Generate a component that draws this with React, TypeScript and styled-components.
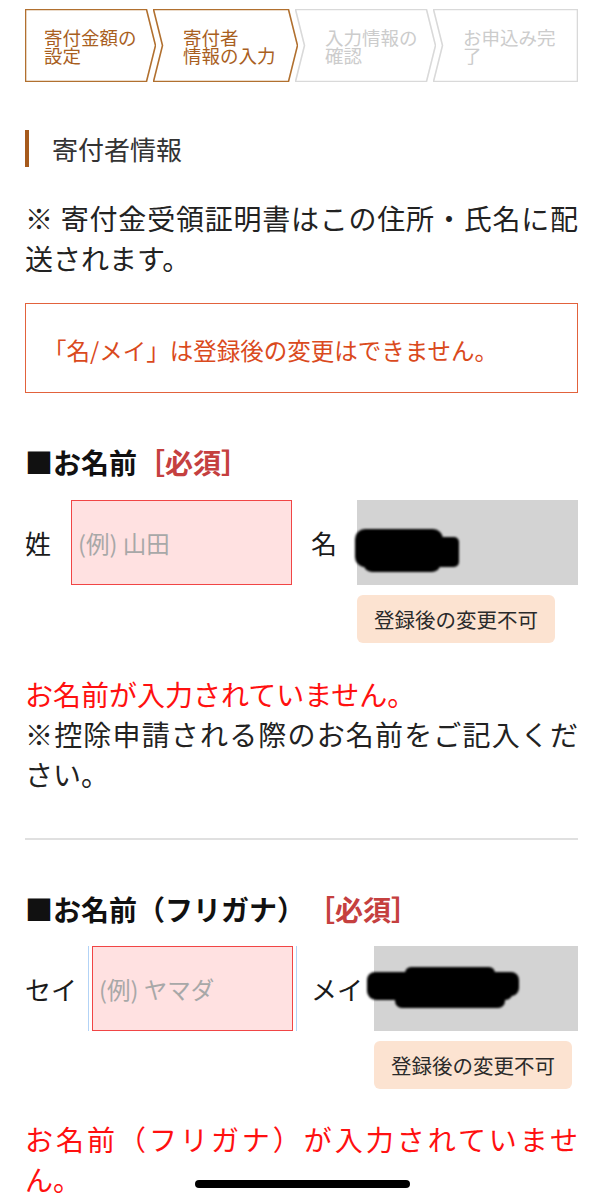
import React from 'react';
import styled, { createGlobalStyle } from 'styled-components';

const GlobalStyle = createGlobalStyle`
  html, body {
    margin: 0;
    padding: 0;
    background: #ffffff;
  }
  body {
    font-family: "Noto Sans CJK JP", "Noto Sans", sans-serif;
    color: #222;
  }
  * {
    box-sizing: border-box;
  }
`;

const Page = styled.div`
  padding: 9px 25px 0;
  width: 603px;
`;

/* ---------- step bar ---------- */

const StepBar = styled.div`
  display: flex;
  height: 73px;
`;

const Step = styled.div<{ $w: number; $first?: boolean }>`
  position: relative;
  flex: 0 0 ${(p) => p.$w}px;
  margin-left: ${(p) => (p.$first ? 0 : -3)}px;
  display: flex;
  align-items: center;
  padding-left: ${(p) => (p.$first ? 19 : 30)}px;
`;

const StepShape = styled.svg`
  position: absolute;
  inset: 0;
  width: 100%;
  height: 100%;
`;

const StepText = styled.span<{ $active?: boolean }>`
  position: relative;
  font-size: 18.5px;
  line-height: 18px;
  margin-top: 1px;
  color: ${(p) => (p.$active ? '#a95f1f' : '#cccccc')};
`;

type StepKind = 'first' | 'middle' | 'last';

const StepOutline = ({ w, kind, active }: { w: number; kind: StepKind; active: boolean }) => {
  const h = 73;
  const d = 9;
  let path = '';
  if (kind === 'first') {
    path = `M0.5,0.5 H${w - d - 0.5} L${w - 0.5},${h / 2} L${w - d - 0.5},${h - 0.5} H0.5 Z`;
  } else if (kind === 'middle') {
    path = `M0.5,0.5 H${w - d - 0.5} L${w - 0.5},${h / 2} L${w - d - 0.5},${h - 0.5} H0.5 L${d + 0.5},${h / 2} Z`;
  } else {
    path = `M0.5,0.5 H${w - 0.5} V${h - 0.5} H0.5 L${d + 0.5},${h / 2} Z`;
  }
  return (
    <StepShape viewBox={`0 0 ${w} ${h}`} preserveAspectRatio="none">
      <path d={path} fill="#fff" stroke={active ? '#b1702f' : '#d9d9d9'} strokeWidth="1.6" />
    </StepShape>
  );
};

const steps = [
  { w: 131, kind: 'first' as StepKind, active: true, l1: '寄付金額の', l2: '設定' },
  { w: 145, kind: 'middle' as StepKind, active: true, l1: '寄付者', l2: '情報の入力' },
  { w: 141, kind: 'middle' as StepKind, active: false, l1: '入力情報の', l2: '確認' },
  { w: 145, kind: 'last' as StepKind, active: false, l1: 'お申込み完', l2: '了' },
];

/* ---------- section parts ---------- */

const SectionTitle = styled.h2`
  margin: 48px 0 0;
  display: flex;
  align-items: center;
  gap: 23px;
  font-size: 26px;
  font-weight: 400;
  color: #333;
  line-height: 37px;
  &::before {
    content: '';
    width: 4px;
    height: 37px;
    background: #a65a1c;
  }
`;

const Para = styled.p<{ $color?: string; $top?: number }>`
  margin: ${(p) => p.$top ?? 0}px 0 0;
  font-size: 28px;
  line-height: 40px;
  text-align: justify;
  color: ${(p) => p.$color ?? '#222'};
`;

const Notice = styled.div`
  margin-top: 25px;
  border: 1px solid #e2623c;
  height: 90px;
  display: flex;
  align-items: center;
  padding: 4px 17px 0;
  font-size: 23.5px;
  color: #da4a1d;
`;

const FieldHeading = styled.h3<{ $top: number }>`
  margin: ${(p) => p.$top}px 0 0;
  font-size: 28px;
  line-height: 40px;
  font-weight: 700;
  color: #111;
`;

const Required = styled.span<{ $gap?: number }>`
  margin-left: ${(p) => p.$gap ?? 0}px;
  color: #c5403f;
`;

const FieldRow = styled.div<{ $top: number }>`
  margin-top: ${(p) => p.$top}px;
  display: grid;
  grid-template-columns: 1fr 1fr;
  column-gap: 19px;
`;

const Half = styled.div`
  display: flex;
  align-items: flex-start;
  min-width: 0;
`;

const FieldLabel = styled.label`
  flex: 0 0 auto;
  min-width: 46px;
  padding-right: 11px;
  height: 85px;
  display: flex;
  align-items: center;
  font-size: 26px;
  color: #1a1a1a;
`;

const TextInput = styled.input`
  flex: 1;
  min-width: 0;
  width: 100%;
  height: 85px;
  border: 1.5px solid #f14545;
  background: #ffe1e1;
  padding: 0 6px;
  font-family: inherit;
  font-size: 23.5px;
  color: #333;
  outline: none;
  &::placeholder {
    color: #a8a8a8;
  }
`;

const FocusFrame = styled.div`
  flex: 1;
  min-width: 0;
  display: flex;
  border-left: 1px solid #b3d3f6;
  border-right: 1px solid #b3d3f6;
  padding: 0 3px;
  margin-right: -5px;
`;

const LockedCol = styled.div`
  flex: 1;
  min-width: 0;
  display: flex;
  flex-direction: column;
  align-items: flex-start;
  gap: 10px;
`;

const LockedBox = styled.div<{ $pad: number; $shift: number }>`
  width: 100%;
  height: 85px;
  background: #d3d3d3;
  display: flex;
  align-items: flex-start;
  padding-top: ${(p) => p.$pad}px;
  & > svg {
    margin-left: ${(p) => p.$shift}px;
  }
`;

const LockNote = styled.span`
  display: inline-flex;
  align-items: center;
  height: 48px;
  padding: 0 17px;
  border-radius: 6px;
  background: #fce3d1;
  font-size: 20.5px;
  color: #2a2a2a;
`;

const Divider = styled.hr`
  margin: 44px 0 0;
  border: none;
  height: 2px;
  background: #e0e0e0;
`;

const HomeBar = styled.div`
  position: fixed;
  left: 195px;
  bottom: 12px;
  width: 215px;
  height: 8px;
  border-radius: 4px;
  background: #000;
`;

const ScribbleA = () => (
  <svg width="110" height="48" viewBox="0 0 110 48">
    <defs>
      <filter id="blurA">
        <feGaussianBlur stdDeviation="1.3" />
      </filter>
    </defs>
    <g fill="#000" filter="url(#blurA)">
      <rect x="2" y="2" width="88" height="38" rx="10" />
      <rect x="6" y="10" width="100" height="30" rx="5" />
      <rect x="10" y="18" width="78" height="27" rx="9" />
      <rect x="4" y="6" width="40" height="30" rx="8" />
    </g>
  </svg>
);

const ScribbleB = () => (
  <svg width="160" height="48" viewBox="0 0 160 48">
    <defs>
      <filter id="blurB">
        <feGaussianBlur stdDeviation="1.3" />
      </filter>
    </defs>
    <g fill="#000" filter="url(#blurB)">
      <rect x="2" y="8" width="152" height="24" rx="8" />
      <rect x="40" y="3" width="90" height="16" rx="6" />
      <rect x="8" y="14" width="140" height="22" rx="8" />
      <rect x="30" y="24" width="110" height="20" rx="7" />
      <rect x="2" y="10" width="30" height="26" rx="9" />
    </g>
  </svg>
);

const App = () => {
  return (
    <Page lang="ja">
      <GlobalStyle />
      <StepBar>
        {steps.map((s, i) => (
          <Step key={i} $w={s.w} $first={i === 0}>
            <StepOutline w={s.w} kind={s.kind} active={s.active} />
            <StepText $active={s.active}>
              {s.l1}
              <br />
              {s.l2}
            </StepText>
          </Step>
        ))}
      </StepBar>

      <SectionTitle>寄付者情報</SectionTitle>

      <Para $top={31}>※ 寄付金受領証明書はこの住所・氏名に配送されます。</Para>

      <Notice>「名/メイ」は登録後の変更はできません。</Notice>

      <FieldHeading $top={49}>
        ■お名前<Required>［必須］</Required>
      </FieldHeading>

      <FieldRow $top={18}>
        <Half>
          <FieldLabel>姓</FieldLabel>
          <TextInput placeholder="(例) 山田" />
        </Half>
        <Half>
          <FieldLabel>名</FieldLabel>
          <LockedCol>
            <LockedBox $pad={27} $shift={-4}>
              <ScribbleA />
            </LockedBox>
            <LockNote>登録後の変更不可</LockNote>
          </LockedCol>
        </Half>
      </FieldRow>

      <Para $top={31} $color="#ff1010">お名前が入力されていません。</Para>
      <Para>※控除申請される際のお名前をご記入ください。</Para>

      <Divider />

      <FieldHeading $top={49}>
        ■お名前（フリガナ）<Required $gap={16}>［必須］</Required>
      </FieldHeading>

      <FieldRow $top={17}>
        <Half>
          <FieldLabel>セイ</FieldLabel>
          <FocusFrame>
            <TextInput placeholder="(例) ヤマダ" />
          </FocusFrame>
        </Half>
        <Half>
          <FieldLabel>メイ</FieldLabel>
          <LockedCol>
            <LockedBox $pad={18} $shift={-9}>
              <ScribbleB />
            </LockedBox>
            <LockNote>登録後の変更不可</LockNote>
          </LockedCol>
        </Half>
      </FieldRow>

      <Para $top={30} $color="#ff1010">お名前（フリガナ）が入力されていません。</Para>

      <HomeBar />
    </Page>
  );
};

export default App;
